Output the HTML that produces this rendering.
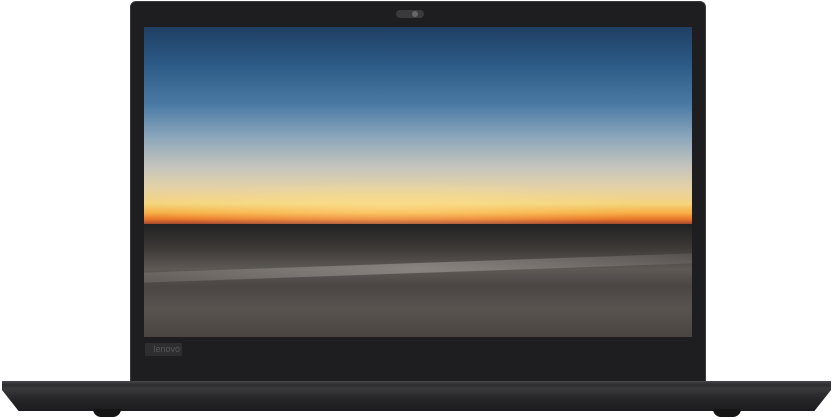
<!DOCTYPE html>
<html><head><style>
body{margin:0;width:833px;height:420px;background:#fff;position:relative;overflow:hidden}
.lid{position:absolute;left:130px;top:1px;width:576px;height:382px;background:#1e1e20;border-radius:6px 6px 0 0;border:1px solid #3a3a3c;box-sizing:border-box}
.screen{position:absolute;left:144px;top:27px;width:548px;height:310px;overflow:hidden;
background:linear-gradient(180deg,#1f3f63 0%,#2c5a86 12%,#4a7aa4 25%,#8ea8bc 36%,#c4c4bc 45%,#e4d2a6 52%,#f5d47e 57%,#f6ae44 60%,#e9782a 62%,#a84a30 63.5%,#4a3236 65%,#2a2628 67%)}
.ground{position:absolute;left:0;top:197px;width:548px;height:113px;
background:linear-gradient(180deg,#222 0%,#3a3735 20%,#5e5955 40%,#4b4643 55%,#58534f 75%,#4a4541 100%)}
.streak{position:absolute;left:0;top:236px;width:548px;height:10px;background:linear-gradient(90deg,rgba(170,165,160,.2),rgba(190,185,180,.45),rgba(150,145,140,.2));transform:skewY(-2deg)}
.glow{position:absolute;left:0;top:150px;width:548px;height:50px;background:radial-gradient(ellipse at 45% 60%,rgba(255,230,150,.5),rgba(255,200,100,0) 60%)}
.cam{position:absolute;left:396px;top:10px;width:28px;height:8px;border-radius:4px;background:#3a3a3c}
.cam:after{content:"";position:absolute;left:16px;top:1px;width:6px;height:6px;border-radius:50%;background:#666}
.logo{position:absolute;left:145px;top:343px;width:37px;height:13px;background:#2e2e30;color:#555;font:9px "Liberation Sans",sans-serif;line-height:13px;text-align:right;padding-right:2px;box-sizing:border-box}
.base{position:absolute;left:2px;top:381px;width:829px;height:30px;background:linear-gradient(180deg,#4a4a4c 0%,#2c2c2e 12%,#39393b 25%,#262628 60%,#1c1c1e 100%);clip-path:polygon(0 0,100% 0,100% 30%,98% 100%,2% 100%,0 30%)}
.foot{position:absolute;top:409px;width:28px;height:8px;background:#151515;border-radius:0 0 8px 8px}
</style></head><body>
<div class="lid"></div>
<div class="cam"></div>
<div class="screen"><div class="glow"></div><div class="ground"></div><div class="streak"></div></div>
<div class="logo">lenovo</div>
<div class="base"></div>
<div class="foot" style="left:93px"></div>
<div class="foot" style="left:713px"></div>
</body></html>
